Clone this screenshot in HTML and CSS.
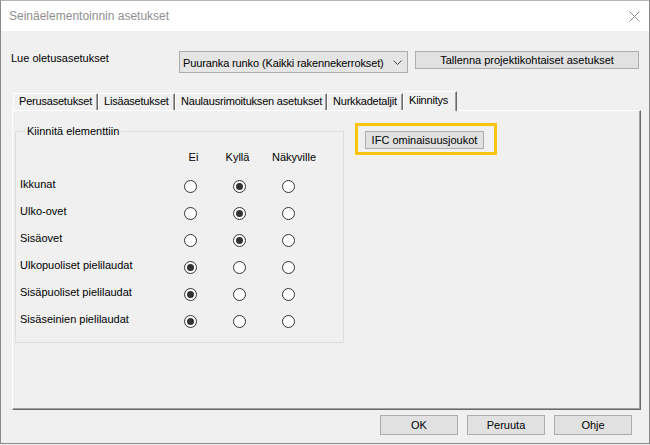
FILE: index.html
```html
<!DOCTYPE html>
<html>
<head>
<meta charset="utf-8">
<link rel="stylesheet" href="styles.css">
</head>
<body>
<div class="window">
  <div class="titlebar">
    <span class="title">Seinäelementoinnin asetukset</span>
    <svg class="close" width="11" height="11" viewBox="0 0 11 11"><path d="M0.5 0.5 L10.5 10.5 M10.5 0.5 L0.5 10.5" stroke="#8c8c8c" stroke-width="1" fill="none"/></svg>
  </div>
  <div class="content">
    <div class="toprow">
      <div class="lbl">Lue oletusasetukset</div>
      <div class="combo">
        <span class="combo-text">Puuranka runko (Kaikki rakennekerrokset)</span>
        <svg class="chev" width="9" height="5" viewBox="0 0 9 5"><path d="M0.5 0.5 L4.5 4.5 L8.5 0.5" stroke="#444" stroke-width="1" fill="none"/></svg>
      </div>
      <div class="btn btn-save">Tallenna projektikohtaiset asetukset</div>
    </div>
    <div class="tabs">
      <div class="tab t1">Perusasetukset</div>
      <div class="tab t2">Lisäasetukset</div>
      <div class="tab t3">Naulausrimoituksen asetukset</div>
      <div class="tab t4">Nurkkadetaljit</div>
      <div class="tab sel">Kiinnitys</div>
    </div>
    <div class="panel">
      <fieldset class="group">
        <legend>Kiinnitä elementtiin</legend>
        <div class="grid">
          <div></div><div class="hd h1">Ei</div><div class="hd h2">Kyllä</div><div class="hd h3">Näkyville</div>

          <div class="rl">Ikkunat</div>
          <div class="rc"><span class="radio"></span></div>
          <div class="rc"><span class="radio on"></span></div>
          <div class="rc"><span class="radio"></span></div>

          <div class="rl">Ulko-ovet</div>
          <div class="rc"><span class="radio"></span></div>
          <div class="rc"><span class="radio on"></span></div>
          <div class="rc"><span class="radio"></span></div>

          <div class="rl">Sisäovet</div>
          <div class="rc"><span class="radio"></span></div>
          <div class="rc"><span class="radio on"></span></div>
          <div class="rc"><span class="radio"></span></div>

          <div class="rl">Ulkopuoliset pielilaudat</div>
          <div class="rc"><span class="radio on"></span></div>
          <div class="rc"><span class="radio"></span></div>
          <div class="rc"><span class="radio"></span></div>

          <div class="rl">Sisäpuoliset pielilaudat</div>
          <div class="rc"><span class="radio on"></span></div>
          <div class="rc"><span class="radio"></span></div>
          <div class="rc"><span class="radio"></span></div>

          <div class="rl">Sisäseinien pielilaudat</div>
          <div class="rc"><span class="radio on"></span></div>
          <div class="rc"><span class="radio"></span></div>
          <div class="rc"><span class="radio"></span></div>
        </div>
      </fieldset>
      <div class="highlight">
        <div class="btn btn-ifc">IFC ominaisuusjoukot</div>
      </div>
    </div>
    <div class="bottom">
      <div class="btn btn-b">OK</div>
      <div class="btn btn-b">Peruuta</div>
      <div class="btn btn-b">Ohje</div>
    </div>
  </div>
</div>
</body>
</html>
```
FILE: styles.css
```css
html, body {
  margin: 0;
  padding: 0;
  background: #f0f0f0;
}
body {
  width: 650px;
  height: 445px;
  overflow: hidden;
  font-family: "Liberation Sans", Arial, sans-serif;
  font-size: 11px;
  color: #000;
}
.window {
  box-sizing: border-box;
  width: 650px;
  height: 444px;
  border: 1px solid #8a8a8a;
  border-top-color: #b4b4b4;
  display: flex;
  flex-direction: column;
  background: #f0f0f0;
}
.titlebar {
  height: 30px;
  background: #fff;
  display: flex;
  align-items: center;
  padding-left: 8px;
  padding-right: 9px;
  flex: 0 0 auto;
}
.title {
  font-size: 12px;
  color: #8f8f8f;
  flex: 1;
}
.close {
  display: block;
}
.content {
  flex: 1;
  display: flex;
  flex-direction: column;
}
.toprow {
  display: flex;
  align-items: flex-start;
  padding-top: 20px;
  height: 22px;
}
.lbl {
  flex: 0 0 178px;
  box-sizing: border-box;
  padding-left: 10px;
  padding-top: 1px;
  line-height: 13px;
}
.combo {
  box-sizing: border-box;
  width: 229px;
  height: 22px;
  border: 1px solid #acacac;
  background: #e5e5e5;
  display: flex;
  align-items: center;
  padding-left: 3px;
  padding-right: 5px;
}
.combo-text {
  flex: 1;
  padding-top: 1px;
  white-space: nowrap;
  letter-spacing: -0.12px;
}
.chev { display: block; }
.btn {
  box-sizing: border-box;
  background: #e1e1e1;
  border: 1px solid #adadad;
  display: flex;
  align-items: center;
  justify-content: center;
  white-space: nowrap;
}
.btn-save {
  margin-left: 7px;
  width: 224px;
  height: 18px;
}
.tabs {
  margin-top: 18px;
  height: 19px;
  display: flex;
  align-items: flex-end;
  padding-left: 12px;
  position: relative;
  z-index: 1;
}
.tab {
  box-sizing: border-box;
  height: 17px;
  border-left: 1px solid #fff;
  border-top: 1px solid #fff;
  border-right: 1px solid #696969;
  box-shadow: inset -1px 0 0 #a0a0a0;
  border-top-right-radius: 1px;
  padding-left: 5px;
  line-height: 15px;
  white-space: nowrap;
  overflow: hidden;
  background: #f0f0f0;
  letter-spacing: -0.2px;
}
.t1 { width: 85px; }
.t2 { width: 77px; }
.t3 { width: 152px; }
.t4 { width: 76px; }
.sel {
  width: 54px;
  height: 20px;
  margin-bottom: -1px;
  padding-left: 5px;
  line-height: 17px;
}
.panel {
  box-sizing: border-box;
  margin-left: 11px;
  width: 629px;
  height: 300px;
  border-left: 1px solid #fff;
  border-top: 1px solid #fff;
  border-right: 1px solid #696969;
  border-bottom: 1px solid #696969;
  box-shadow: inset -1px -1px 0 #a0a0a0;
  display: flex;
  align-items: flex-start;
  padding: 13px 0 0 2px;
}
.group {
  box-sizing: border-box;
  margin: 0;
  width: 329px;
  height: 219px;
  border: 1px solid #dcdcdc;
  padding: 0 0 0 4px;
  min-width: 0;
}
.group legend {
  padding: 0 2px;
  margin-left: 5px;
  line-height: 14px;
}
.grid {
  display: grid;
  grid-template-columns: 146px 49px 49px 49px;
  grid-template-rows: 23px repeat(6, 27px);
  padding-top: 12px;
}
.hd {
  line-height: 14px;
  text-align: center;
  white-space: nowrap;
}
.h1 { padding-left: 6px; }
.h2 { padding-right: 4px; }
.h3 { padding-left: 8px; }
.rl {
  display: flex;
  align-items: center;
  padding-bottom: 6px;
  white-space: nowrap;
}
.rc {
  display: flex;
  align-items: center;
  justify-content: center;
}
.radio {
  box-sizing: border-box;
  width: 13px;
  height: 13px;
  border: 1px solid #333;
  border-radius: 50%;
  background: #fff;
  display: flex;
  align-items: center;
  justify-content: center;
}
.radio.on::after {
  content: "";
  width: 7px;
  height: 7px;
  border-radius: 50%;
  background: #333;
}
.highlight {
  margin-left: 11px;
  margin-top: -1px;
  border: 3px solid #fcc40c;
  padding: 5px 10px 3px 7px;
}
.btn-ifc {
  width: 119px;
  height: 18px;
}
.bottom {
  display: flex;
  justify-content: flex-end;
  padding-right: 17px;
  margin-top: 5px;
  gap: 9px;
}
.btn-b {
  width: 78px;
  height: 20px;
}
```
